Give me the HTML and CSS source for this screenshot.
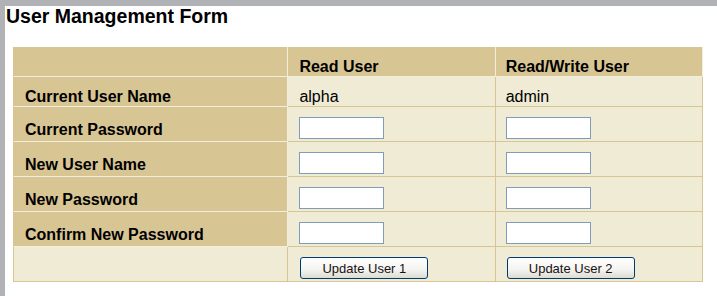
FILE: index.html
```html
<!DOCTYPE html>
<html lang="en">
  <head>
    <meta charset="UTF-8" />
    <title>User Management Form</title>
    <link rel="stylesheet" href="styles.css">
  </head>
  <body>
    <div class="panel">
      <h1 class="title">User Management Form</h1>

      <form class="user-form" onsubmit="return false;">
        <table class="user-table">
          <tr class="row-head">
            <th class="label"></th>
            <th class="head">Read User</th>
            <th class="head">Read/Write User</th>
          </tr>
          <tr class="row-short">
            <td class="label">Current User Name</td>
            <td class="value">alpha</td>
            <td class="value">admin</td>
          </tr>
          <tr>
            <td class="label">Current Password</td>
            <td class="field"><input type="password" class="text-input" /></td>
            <td class="field"><input type="password" class="text-input" /></td>
          </tr>
          <tr>
            <td class="label">New User Name</td>
            <td class="field"><input type="text" class="text-input" /></td>
            <td class="field"><input type="text" class="text-input" /></td>
          </tr>
          <tr>
            <td class="label">New Password</td>
            <td class="field"><input type="password" class="text-input" /></td>
            <td class="field"><input type="password" class="text-input" /></td>
          </tr>
          <tr>
            <td class="label">Confirm New Password</td>
            <td class="field"><input type="password" class="text-input" /></td>
            <td class="field"><input type="password" class="text-input" /></td>
          </tr>
          <tr>
            <td class="label empty"></td>
            <td class="field"><button class="update-btn">Update User 1</button></td>
            <td class="field"><button class="update-btn">Update User 2</button></td>
          </tr>
        </table>
      </form>
    </div>
  </body>
</html>
```

FILE: styles.css
```css
* {
  margin: 0;
  padding: 0;
  box-sizing: border-box;
}

body {
  font-family: "Liberation Sans", Arial, sans-serif;
  background: #b1b2b6;
  height: 296px;
  overflow: hidden;
}

.panel {
  background: white;
  margin: 6px 0 0 5px;
  height: 290px;
}

.title {
  font-size: 19.5px;
  font-weight: bold;
  color: #000;
  line-height: 21px;
  padding-left: 1px;
}

.user-table {
  margin: 20px 0 0 8px;
  width: 690px;
  border-collapse: separate;
  border-spacing: 0;
  font-size: 16px;
  line-height: 18px;
  color: #000;
}

.user-table td,
.user-table th {
  height: 35px;
  vertical-align: bottom;
  text-align: left;
  padding: 0 11px 1px 11px;
  background: #f0ebd4;
  border-right: 1px solid #d8c594;
  border-bottom: 1px solid #d8c594;
}

.user-table tr td:last-child,
.user-table tr th:last-child {
  padding-left: 10px;
}

.user-table tr td:first-child,
.user-table tr th:first-child {
  border-left: 1px solid #d8c594;
  width: 275px;
}

.user-table .row-head th,
.user-table .row-short td {
  height: 30px;
  padding-bottom: 0;
}

.user-table .label,
.user-table .head {
  background: #d8c594;
  border-right-color: #f3eedc;
  border-bottom-color: #f3eedc;
  font-weight: bold;
  padding-bottom: 2px;
}

.user-table .row-head th,
.user-table .row-short .label {
  padding-bottom: 0;
}

.user-table .label.empty {
  background: #f0ebd4;
  border-right-color: #d8c594;
  border-bottom-color: #d8c594;
}

.user-table .head {
  width: 207px;
}

.user-table .value {
  font-weight: normal;
}

.text-input {
  display: block;
  width: 85px;
  height: 22px;
  margin-bottom: 1px;
  border: 1px solid #7f9db9;
  background: white;
  font-size: 13px;
  font-family: inherit;
}

.update-btn {
  display: block;
  width: 128px;
  height: 22px;
  margin-left: 1px;
  margin-bottom: 1px;
  border: 1px solid #003c74;
  border-radius: 3px;
  background: linear-gradient(#ffffff 0%, #f3f3ef 60%, #dcdcd4 100%);
  font-family: inherit;
  font-size: 13px;
  color: #1c1010;
  cursor: pointer;
}
```
